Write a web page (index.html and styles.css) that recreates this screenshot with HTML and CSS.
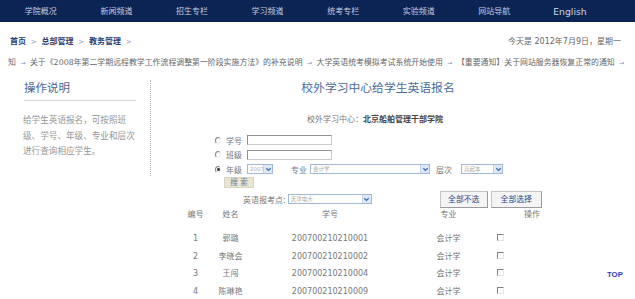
FILE: index.html
```html
<!DOCTYPE html>
<html lang="zh">
<head>
<meta charset="utf-8">
<title>校外学习中心给学生英语报名</title>
<link rel="stylesheet" href="styles.css">
</head>
<body>
<nav class="topnav">
  <a class="nav-item">学院概况</a>
  <a class="nav-item">新闻频道</a>
  <a class="nav-item">招生专栏</a>
  <a class="nav-item">学习频道</a>
  <a class="nav-item">统考专栏</a>
  <a class="nav-item">实验频道</a>
  <a class="nav-item">网站导航</a>
  <a class="nav-item en">English</a>
</nav>

<div class="crumbbar">
  <div class="crumbs">首页 <span class="gt">&gt;</span> 总部管理 <span class="gt">&gt;</span> 教务管理 <span class="gt">&gt;</span></div>
  <div class="today">今天是 2012年7月9日，星期一</div>
</div>

<div class="ticker">知 <span class="arr">→</span> 关于《2008年第二学期远程教学工作流程调整第一阶段实施方法》的补充说明 <span class="arr">→</span> 大学英语统考模拟考试系统开始使用 <span class="arr">→</span> 【重要通知】关于网站服务器恢复正常的通知 <span class="arr">→</span></div>

<div class="main">
  <aside class="sidebar">
    <h2 class="side-title">操作说明</h2>
    <p class="side-text">给学生英语报名，可按照班级、学号、年级、专业和层次进行查询相应学生。</p>
  </aside>

  <section class="content">
    <h1 class="page-title">校外学习中心给学生英语报名</h1>
    <div class="center-info">校外学习中心：<b>北京船舶管理干部学院</b></div>

    <div class="form">
      <div class="frow">
        <span class="radio"></span><span class="lbl">学号</span><span class="textbox"></span>
      </div>
      <div class="frow">
        <span class="radio"></span><span class="lbl">班级</span><span class="textbox"></span>
      </div>
      <div class="frow">
        <span class="radio on"></span><span class="lbl">年级</span>
        <span class="select w-year"><span class="sv">2007</span><span class="arrow"><svg viewBox="0 0 8 8" width="8" height="8"><path d="M1.5 2.5 L4 5 L6.5 2.5" fill="none" stroke="#3d6fb6" stroke-width="1.6"/></svg></span></span>
        <span class="lbl2">专业</span>
        <span class="select w-major"><span class="sv">会计学</span><span class="arrow"><svg viewBox="0 0 8 8" width="8" height="8"><path d="M1.5 2.5 L4 5 L6.5 2.5" fill="none" stroke="#3d6fb6" stroke-width="1.6"/></svg></span></span>
        <span class="lbl3">层次</span>
        <span class="select w-level"><span class="sv">高起本</span><span class="arrow"><svg viewBox="0 0 8 8" width="8" height="8"><path d="M1.5 2.5 L4 5 L6.5 2.5" fill="none" stroke="#3d6fb6" stroke-width="1.6"/></svg></span></span>
      </div>
      <div class="srow"><button class="search-btn">搜 索</button></div>
      <div class="prow">
        <span class="lbl">英语报考点:</span>
        <span class="select w-site"><span class="sv">天津电大</span><span class="arrow"><svg viewBox="0 0 8 8" width="8" height="8"><path d="M1.5 2.5 L4 5 L6.5 2.5" fill="none" stroke="#3d6fb6" stroke-width="1.6"/></svg></span></span>
        <button class="btn btn-none">全部不选</button>
        <button class="btn btn-all">全部选择</button>
      </div>
    </div>

    <div class="grid">
      <div class="hd">编号</div><div class="hd">姓名</div><div class="hd">学号</div><div class="hd">专业</div><div class="hd">操作</div>
      <div class="c">1</div><div class="c">郭璐</div><div class="c">200700210210001</div><div class="c">会计学</div><div class="c cb"><span class="check"></span></div>
      <div class="c">2</div><div class="c">李晓会</div><div class="c">200700210210002</div><div class="c">会计学</div><div class="c cb"><span class="check"></span></div>
      <div class="c">3</div><div class="c">王闯</div><div class="c">200700210210004</div><div class="c">会计学</div><div class="c cb"><span class="check"></span></div>
      <div class="c">4</div><div class="c">陈琳艳</div><div class="c">200700210210009</div><div class="c">会计学</div><div class="c cb"><span class="check"></span></div>
    </div>
  </section>
</div>

<a class="top-link">TOP</a>
</body>
</html>
```

FILE: styles.css
```css
* { box-sizing: border-box; }
html, body {
  margin: 0;
  padding: 0;
  background: #fff;
  width: 635px;
  height: 299px;
  overflow: hidden;
  font-family: "DejaVu Sans", "Noto Sans CJK SC", sans-serif;
  font-size: 8px;
  color: #777;
}
body { position: relative; }

.topnav {
  display: flex;
  height: 22px;
  background: #0c2453;
  padding-left: 3px;
  align-items: center;
}
.nav-item {
  width: 75.6px;
  text-align: center;
  color: #c3cce0;
  font-size: 8px;
  line-height: 22px;
  padding-top: 1px;
}
.nav-item.en { font-size: 9.3px; color: #cdd5e6; }

.crumbbar {
  display: flex;
  justify-content: space-between;
  align-items: center;
  height: 20px;
  margin-top: 8px;
  padding: 0 14px 0 10px;
}
.crumbs {
  color: #2a4272;
  font-weight: bold;
}
.crumbs .gt {
  color: #8a96b0;
  font-weight: normal;
  font-size: 7px;
  margin: 0 2px;
}
.today { color: #666; }

.ticker {
  height: 14px;
  line-height: 14px;
  margin-top: 6px;
  padding-left: 8px;
  color: #666;
  white-space: nowrap;
  font-size: 7.9px;
}
.ticker .arr {
  color: #7890bd;
  font-size: 6px;
  margin: 0 2px;
}

.main {
  display: flex;
  margin-top: 10px;
}
.sidebar {
  width: 151px;
  height: 96px;
  padding-left: 24px;
  border-right: 1px dotted #b5b5b5;
}
.side-title {
  margin: 0;
  width: 112px;
  font-size: 11.5px;
  font-weight: normal;
  line-height: 16px;
  color: #4a6892;
  padding-bottom: 4px;
  border-bottom: 1px solid #d6d6d6;
}
.side-text {
  margin: 12px 0 0 -1px;
  width: 112px;
  line-height: 15.5px;
  color: #959595;
  font-size: 8.6px;
}

.content {
  flex: 1;
  position: relative;
}
.page-title {
  margin: 0;
  width: 454px;
  text-align: center;
  font-size: 11.8px;
  font-weight: normal;
  line-height: 16px;
  color: #4a6c9a;
}
.center-info {
  margin: 18px 0 0 156px;
  line-height: 12px;
  color: #777;
}
.center-info b { color: #444; }

.form { margin-top: 7px; }
.frow {
  display: flex;
  align-items: center;
  height: 14px;
  margin-left: 64px;
}
.frow + .frow { margin-top: 0.5px; }
.radio {
  width: 6px;
  height: 7px;
  border-radius: 50%;
  border: 1px solid #eee;
  border-top-color: #888;
  border-left-color: #888;
  margin-right: 5px;
  position: relative;
}
.radio.on::after {
  content: "";
  position: absolute;
  left: 1px;
  top: 1.5px;
  width: 2.5px;
  height: 2.5px;
  border-radius: 50%;
  background: #444;
}
.lbl { color: #777; margin-right: 5px; }
.textbox {
  width: 85px;
  height: 10px;
  border: 1px solid #909090;
  border-right-color: #cbcbcb;
  border-bottom-color: #cbcbcb;
  background: #fff;
}
.select {
  display: flex;
  align-items: stretch;
  height: 10px;
  border: 1px solid #a3b8d6;
  background: #fff;
}
.select .sv {
  flex: 1;
  color: #aaa;
  font-size: 5.5px;
  line-height: 8px;
  padding-left: 2px;
  white-space: nowrap;
  overflow: hidden;
}
.select .arrow {
  width: 9px;
  background: #dde8f8;
  border-left: 1px solid #c3d3ec;
  display: flex;
  align-items: center;
  justify-content: center;
}
.select .arrow svg { width: 7px; height: 7px; }
.w-year { width: 26px; }
.w-major { width: 120px; }
.w-level { width: 42px; }
.w-site { width: 84px; }
.lbl2 { margin: 0 3px 0 18px; color: #777; }
.lbl3 { margin: 0 9px 0 6px; color: #777; }

.srow {
  margin: 1px 0 0 73px;
  height: 12px;
}
.search-btn {
  display: block;
  width: 30px;
  height: 11px;
  padding: 0;
  border: 1px solid #d8d4c2;
  background: #e9e5d3;
  color: #6a7c9c;
  font: 7.5px/9px "DejaVu Sans", "Noto Sans CJK SC", sans-serif;
}

.prow {
  display: flex;
  align-items: center;
  height: 18px;
  margin: 1px 0 0 92px;
}
.prow .lbl { margin-right: 2px; }
.btn {
  height: 17px;
  padding: 0;
  border: 1px solid #9a9a9a;
  border-top-color: #c4c4c4;
  border-left-color: #c4c4c4;
  background: #f4f4f4;
  color: #2a4588;
  font: 7.8px/15px "DejaVu Sans", "Noto Sans CJK SC", sans-serif;
}
.btn-none { width: 48px; margin-left: 68px; }
.btn-all { width: 51px; margin-left: 3px; }

.grid {
  display: grid;
  grid-template-columns: 31px 39px 160px 77px 90px;
  grid-template-rows: 23px repeat(4, 17.7px);
  margin-left: 29px;
  margin-top: -1px;
}
.hd {
  text-align: center;
  line-height: 15px;
  color: #777;
}
.c {
  text-align: center;
  line-height: 17.7px;
  color: #777;
}
.cb {
  text-align: left;
  display: flex;
  align-items: center;
  padding-left: 10px;
}
.check {
  width: 7px;
  height: 7px;
  border: 1px solid #e6e6e6;
  border-top-color: #808080;
  border-left-color: #808080;
  margin-top: -3px;
}

.top-link {
  position: absolute;
  left: 607px;
  top: 270px;
  font: bold 7.8px/10px "Liberation Sans", sans-serif;
  color: #2b3fc4;
}
```
